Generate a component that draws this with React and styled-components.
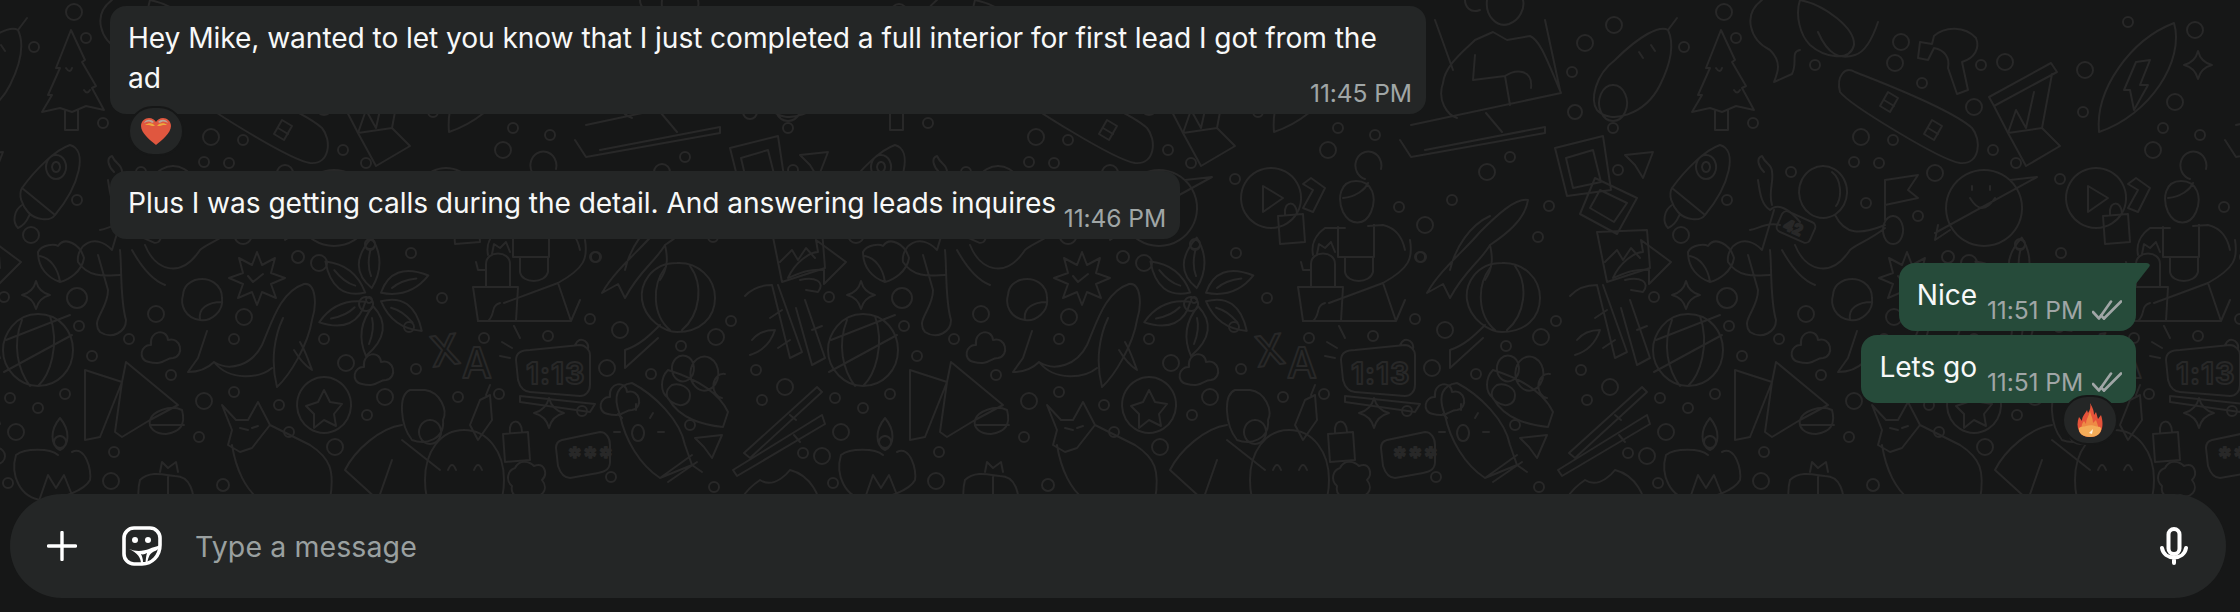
import React from "react";
import styled, { createGlobalStyle } from "styled-components";

const Global = createGlobalStyle`
  html, body { margin: 0; padding: 0; background: #161717; }
  body { font-family: Inter, "Liberation Sans", sans-serif; -webkit-font-smoothing: antialiased; }
`;

const Page = styled.div`
  position: relative;
  width: 2240px;
  height: 612px;
  overflow: hidden;
  background: #161717;
  display: flex;
  flex-direction: column;
`;
const Wallpaper = styled.svg`
  position: absolute;
  inset: 0;
  width: 2240px;
  height: 612px;
`;
const Conversation = styled.main`
  position: relative;
  height: 494px;
  box-sizing: border-box;
  padding: 6px 104px 0 110px;
  display: flex;
  flex-direction: column;
  align-items: flex-start;
`;
const Row = styled.div`
  display: flex;
  flex-direction: column;
  align-self: ${p => (p.$out ? "flex-end" : "flex-start")};
  align-items: ${p => (p.$out ? "flex-end" : "flex-start")};
  margin-top: ${p => p.$gap || 0}px;
`;
const Bubble = styled.div`
  position: relative;
  box-sizing: border-box;
  max-width: 1316px;
  padding: 12px 18px 16px 18px;
  border-radius: ${p => (p.$tail ? "16px 0 16px 16px" : "16px")};
  background: ${p => (p.$out ? "#264b3a" : "#242626")};
  color: #f7f8f8;
  font-size: 28.15px;
  line-height: 40px;
  letter-spacing: -0.08px;
`;
const Spacer = styled.span`
  display: inline-block;
  width: ${p => p.$w}px;
  height: 1px;
`;
const Meta = styled.div`
  position: absolute;
  right: 14px;
  bottom: 7px;
  display: flex;
  align-items: center;
  gap: 9px;
  font-size: 24.6px;
  line-height: 28px;
  letter-spacing: -0.1px;
  color: #a0a6a6;
  white-space: nowrap;
`;
const Tail = styled.svg`
  position: absolute;
  top: 0;
  right: -14px;
  width: 15px;
  height: 22px;
`;
const Reaction = styled.div`
  box-sizing: border-box;
  width: 56px;
  height: 50px;
  margin: -8px ${p => (p.$out ? "18px" : "0")} 0 ${p => (p.$out ? "0" : "18px")};
  border-radius: 25px;
  background: #242626;
  border: 2px solid #161717;
  display: flex;
  align-items: center;
  justify-content: center;
  z-index: 1;
`;
const Composer = styled.div`
  position: relative;
  box-sizing: border-box;
  width: 2216px;
  height: 104px;
  margin-left: 10px;
  border-radius: 52px;
  background: #242626;
  display: flex;
  align-items: center;
  padding: 0 38px 0 37px;
`;
const IconSlot = styled.span`
  display: flex;
  flex: none;
  margin-right: ${p => p.$mr || 0}px;
`;
const Placeholder = styled.span`
  flex: 1;
  font-size: 28.5px;
  letter-spacing: 0.1px;
  color: #9aa0a0;
`;

const dots = [
[298,257,6],[319,263,8],[411,253,5],[370,245,5],[4,297,5],[77,298,10],[156,314,8],[79,326,5],[129,339,5],[92,356,5],[244,317,8],[234,339,5],[324,339,5],[346,363,8],[416,369,5],[409,327,5],[442,298,5],[484,338,5],[596,257,5],[590,319,5],[620,330,8],[548,336,5],[607,368,8],[651,374,5],[681,346,5],[171,375,5],[65,394,5],[10,398,5],[38,408,5],[16,432,8],[204,401,8],[234,392,5],[279,405,5],[289,432,5],[199,437,5],[114,452,5],[335,447,8],[367,415,5],[385,397,8],[458,397,5],[499,394,5],[582,411,5],[611,477,5],[111,481,8],[8,483,5],[223,485,6],[716,337,8],[731,321,5],[756,370,5],[785,387,8],[762,400,5],[690,425,5],[822,456,8],[803,453,5],[714,487,5],
[74,12,8],[34,47,5],[86,38,5],[789,25,8],[760,43,8],[747,72,5],[750,112,7],[788,128,5],[103,123,5],[165,65,5],[245,63,8],[251,42,8],[272,83,5],[355,62,8],[331,65,5],[435,70,8],[324,107,8],[433,112,5],[478,22,5],[545,30,8],[525,102,8],[513,128,5],[550,135,5],[503,150,8],[343,150,5],[366,163,5],[285,173,8],[243,140,5],[211,137,8],[204,162,5],[229,163,5],[685,157,5],[662,172,8],[627,200,5],[600,225,8],[595,257,5],[724,206,5],[713,237,5],[793,170,5],[77,200,5],[31,235,8],[141,172,5],[216,203,5],[268,216,5],[370,244,5],[574,207,5],[410,179,5],
];

const spark = (x, y, r) =>
  `M${x} ${y - r}Q${x + r * 0.2} ${y - r * 0.2} ${x + r} ${y}Q${x + r * 0.2} ${y + r * 0.2} ${x} ${y + r}Q${x - r * 0.2} ${y + r * 0.2} ${x - r} ${y}Q${x - r * 0.2} ${y - r * 0.2} ${x} ${y - r}Z`;
const cloud = (x, y) =>
  `M${x - 12} ${y + 14}C${x - 24} ${y + 12} ${x - 20} ${y - 4} ${x - 10} ${y - 3}C${x - 12} ${y - 18} ${x + 6} ${y - 20} ${x + 7} ${y - 8}C${x + 20} ${y - 12} ${x + 24} ${y + 8} ${x + 12} ${y + 10}C${x + 4} ${y + 10} ${x + 2} ${y + 18} ${x - 12} ${y + 14}Z`;
const lock = (x, y) =>
  `M${x - 13} ${y - 6}L${x + 12} ${y - 8}L${x + 14} ${y + 20}L${x - 11} ${y + 22}ZM${x - 6} ${y - 7}C${x - 8} ${y - 22} ${x + 6} ${y - 22} ${x + 6} ${y - 8}`;

const paths = [
  // tree
  "M71 30L56 68L60 68L48 95L52 95L42 112L60 108L72 112L86 106L104 110L92 88L96 86L82 62L85 60ZM65 111V130H78V110M66 68q4 6 6 0M84 90q3 5 6 0",
  // shrimp + mouse
  "M112 0C92 15 100 40 120 50C132 62 128 72 124 82L142 74C148 62 140 52 150 50M150 0C175 5 205 28 204 45C200 62 175 58 160 45C150 35 145 15 150 0M168 32C178 55 190 60 205 55C215 52 222 40 228 22",
  // skateboard
  "M205 72C195 66 186 76 190 92C200 105 290 160 310 163C330 165 332 140 322 128C300 108 225 80 205 72ZM238 92l10 6l-8 14l-10 -6zM282 120l10 6l-8 14l-10 -6zM234 100l10 6M278 128l10 6",
  // hammer
  "M270 42L268 58L278 60L284 48C295 50 300 58 298 68L307 94L318 90L312 62C325 58 330 48 326 38C315 26 295 26 284 36L282 44Z",
  // drum
  "M339 97L401 63L407 72L344 106ZM344 106L358 133L392 128L402 74M358 133L366 110L376 128L384 92M358 133L376 166L410 146L392 128",
  // surfboard
  "M524 23C535 60 500 115 449 132C445 90 480 40 524 23ZM500 60L490 85L498 85L484 110L480 90L474 90L486 62Z",
  // woman & laptop
  "M662 0C660 16 672 28 684 24C695 20 700 8 698 0M640 0C640 6 645 14 655 10M618 83C620 65 640 50 650 40L668 32L682 40L705 36C715 40 722 60 736 93L586 125M618 83C612 100 622 115 632 118M650 55L648 80L680 76M680 76C692 68 708 70 706 88M680 76L685 105M661 113L677 132M575 140L586 157L720 133L720 127L600 150M610 20L628 70M720 20L735 90",
  // pear
  "M843 30C835 25 815 35 790 60C770 75 765 100 772 110C785 125 820 115 835 85C845 65 850 45 843 30ZM843 30L852 18M788 85a14 18 0 1 0 .1 0M826 45l4 6M814 52l4 6",
  // polaroids
  "M730 148L778 136L786 190L742 196ZM741 158L768 150L776 182L748 188ZM770 178L812 198L792 234L755 214ZM775 190L802 203L789 222L765 208ZM772 232L822 230L825 268L782 282ZM780 262L792 250L798 260L806 248L815 258",
  // plane
  "M800 155L828 152L818 178L810 165Z",
  // rocket
  "M70 145C88 150 80 185 55 215C50 222 35 220 28 212C22 205 18 195 22 188C35 170 55 150 70 145ZM22 188L55 215M22 205C14 210 12 222 18 228C26 225 28 218 30 214M56 155a10 12 0 1 0 .1 0M56 162a4 5 0 1 0 .1 0",
  // astronaut
  "M173 166a24 26 0 1 0 .1 0M182 172C192 180 192 198 186 206M114 172C108 166 106 158 112 156C116 165 122 164 122 172C124 182 118 192 122 205M108 180C110 195 112 205 120 210C128 202 140 210 150 222M100 230C110 228 118 222 130 225M124 210L112 250C95 232 76 245 78 262C90 280 110 275 120 275M120 250C122 270 120 300 126 320C126 332 112 340 100 332C90 320 108 310 108 290L98 255M132 250C142 268 152 280 165 285M145 245C155 270 180 280 200 250C205 245 220 240 235 228M185 215C195 235 210 235 235 225M243 216a10 14 0 1 0 .1 0",
  // flag + planet
  "M235 180V220M235 180L268 175L258 190L268 198L235 205M334 170a38 38 0 1 0 .1 0M285 233L387 177L360 180M300 230L285 240L288 225M320 198q12 20 25 0M322 186v4M340 186v4",
  // play + shape + lock
  "M446 168a30 30 0 1 0 .1 0M438 186L438 212L458 198ZM486 178L500 188L488 212L478 208L488 190L478 184Z",
  lock(466, 222),
  // gardener
  "M531 181C515 181 512 198 518 212C525 226 540 226 546 212C552 198 548 181 531 181ZM518 198C530 197 540 190 543 183M540 179a13 14 0 1 1 16 -10M500 228C490 235 486 245 488 255M520 228L500 228M543 226L558 225C572 228 578 240 580 250M513 227V257M549 225V257M513 257H549M520 257V272C522 284 545 284 548 272V257M585 240C588 258 585 268 558 283L504 303M558 283L571 321H478M580 300L571 321",
  // cactus pot
  "M473 287H518L516 321H478ZM486 287V264C486 250 510 250 510 264V287M486 270H478L476 262M500 303C490 306 496 314 488 321M510 252L506 242L500 248L494 244L492 254",
  // fish
  "M703 200C690 198 672 215 655 232C640 250 615 270 602 293L618 284L625 298C640 270 655 262 665 245C680 235 700 220 703 200ZM625 270C630 248 645 225 665 216M665 245C668 258 668 268 660 280",
  // arrow
  "M788 278C795 262 810 252 818 252L816 240L846 262L824 284V270C808 268 796 275 788 278Z",
  // lantern
  "M677 263C650 263 640 285 642 300C645 320 665 332 677 332C700 332 715 318 715 298C715 278 698 262 677 263ZM665 268C652 285 652 315 670 330M690 266C704 285 700 315 682 330M658 338L625 368L625 350C640 345 650 335 660 325",
  // bamboo
  "M745 296C755 285 768 285 772 285L790 358L802 352L778 285M782 310L770 318M790 340L778 348M800 280C815 276 826 282 818 292L806 290M805 300L825 358L812 365L796 308M812 330L822 326M752 340C760 330 770 330 775 330C770 345 760 352 750 355",
  // globe
  "M38 314C15 314 3 335 3 350C3 370 20 386 38 386C58 386 73 370 73 350C73 332 60 314 38 314ZM6 340L70 315M4 372L72 335M22 320C12 345 18 370 30 386M50 316C60 345 50 375 38 386",
  cloud(161, 348), cloud(374, 370), cloud(620, 400),
  // whale
  "M207 331L198 358L188 372C200 372 208 368 214 362C230 372 252 365 262 345C272 322 280 292 304 284C316 282 317 305 312 320C308 345 290 375 277 387C270 360 275 335 283 318M214 362C230 382 260 378 272 368M300 342C306 352 310 365 312 370C304 365 297 355 294 350",
  // triangle + bowl
  "M85 370L122 382L100 437L85 440ZM126 362L178 405L150 420L122 437L115 432L122 382ZM150 420C152 412 170 404 182 410C186 425 180 432 166 434C155 434 148 428 150 420ZM150 425H184",
  // diya
  "M60 418C50 430 50 445 60 450C70 445 70 430 60 418ZM60 436a6 6 0 1 0 .1 0M16 455C25 448 50 448 58 455M72 452C85 445 92 470 90 480M16 455C10 475 20 498 42 500C60 500 85 490 90 480M40 498L48 475L56 488L64 475L72 495",
  // fox
  "M222 405L232 430L228 445L240 452L252 448L270 425L258 402L248 420L236 420ZM270 425L310 445C330 458 335 470 330 500M232 445C236 470 246 490 260 500M240 428l8 2M252 428l6 -2",
  // star circle
  "M324 377a27 28 0 1 0 .1 0M324 390L330 402L342 404L334 414L336 426L324 420L314 428L314 414L306 406L318 402Z",
  // man
  "M410 390C398 395 400 425 412 440C425 445 445 440 443 420C448 410 440 392 425 390ZM430 420a11 12 0 1 0 .1 0M402 425C380 428 355 450 345 470L378 500M402 440L440 470M392 460L378 500",
  // smiley
  "M464 430C440 430 425 452 425 480C425 515 445 530 464 530C488 530 504 510 504 480C504 452 488 430 464 430ZM448 470q4 -10 8 0M474 470q4 -10 8 0",
  // burst
  "M257 252L262 265L275 258L271 273L285 278L271 284L276 298L262 292L257 305L252 292L238 298L243 284L229 278L243 273L239 258L252 265ZM248 276l5 6l10 -8",
  // blob
  "M195 280C210 276 222 285 222 298C224 312 210 322 200 320C185 318 180 305 183 295C184 285 190 282 195 280ZM200 320C198 308 208 302 222 302",
  // flower centre
  "M366 297a7 7 0 1 0 .1 0M369 297a3 3 0 1 0 .1 0",
  // Clock
  "M530 350L580 345C585 345 590 350 590 355L590 385C590 392 585 396 580 396L530 392C525 392 520 388 518 380L516 360C516 353 522 350 530 350ZM520 396L595 404L590 412L520 402ZM512 348L502 342M520 338L514 326M510 358L500 356M575 345q4 -8 10 -4q4 3 3 8",
  // password & sun lantern
  "M562 440L600 432C606 432 610 438 610 445L610 462C610 470 604 472 598 473L570 478C563 478 560 472 558 466L556 448C556 444 558 441 562 440Z",
  "M632 383C655 395 680 420 685 445L692 465L660 478C640 465 625 440 620 415C612 395 618 385 632 383ZM660 478L692 455M668 482L697 462M692 465L702 472",
  "M638 425a6 8 0 1 0 .1 0M650 418l3 -5M636 410V404M622 418l-4 -4M620 432h-6M658 432h6",
  // candle, puzzle
  "M470 425L480 400L490 395L492 420L478 440ZM486 395L490 385",
  "M515 468C520 458 530 462 534 466C545 462 548 474 542 480C550 490 540 500 530 495C520 502 510 495 512 486C505 480 508 470 515 468Z",
  // chopsticks
  "M817 387L744 453L750 458L822 392ZM822 415L733 470L737 476L825 424ZM790 415L796 420M794 435L800 442",
  // paw
  "M668 370C660 378 660 392 668 398C680 420 705 425 723 427L728 412C720 395 700 380 668 370ZM688 380a11 13 0 1 1 -2 -24a11 13 0 0 1 2 24ZM708 390a14 17 0 1 1 2 -32a14 17 0 0 1 -2 32ZM722 398a10 12 0 1 1 3 -24M672 385C680 382 690 388 690 395C690 405 680 408 672 402C665 398 665 390 672 385Z",
  // heart boot
  "M38 252C42 244 55 244 58 246C65 236 80 244 84 258C82 272 68 280 60 282C48 278 38 268 38 252ZM40 256C50 258 58 268 60 282",
  // cactus bottom, plane low
  "M140 480C150 470 165 475 175 476C190 476 195 490 195 520M160 472l2 -10l6 6l8 -6l2 10M140 480C136 495 140 510 144 520M168 476V520",
  "M695 438L722 435L712 458L704 447Z",
  // small ball
  "M760 480C745 490 735 505 735 520M790 470C810 475 822 495 822 520M760 480C775 490 790 470 790 470",
  spark(36, 295, 14), spark(548, 65, 14), spark(549, 413, 15),
  lock(516, 440),
];

const Doodles = () => (
  <g fill="none" stroke="#282828" strokeWidth="2" strokeLinecap="round" strokeLinejoin="round">
    {dots.map(([x, y, r], i) => <circle key={i} cx={x} cy={y} r={r} />)}
    {paths.map((d, i) => <path key={i} d={d} />)}
    {[-8, 62, 118, 180, 238, 300].map(a => (
      <g key={a} transform={`rotate(${a} 373 297)`}>
        <path d="M373 288C358 272 360 255 380 238C388 256 386 272 373 288ZM374 276C372 268 373 260 377 250" />
      </g>
    ))}
    <text x="526" y="384" fontFamily="Inter, sans-serif" fontSize="30" fontWeight="700" letterSpacing="1">1:13</text>
    <text x="430" y="366" fontFamily="Inter, sans-serif" fontSize="42" fontWeight="500" transform="rotate(-8 440 350)">X</text>
    <text x="462" y="378" fontFamily="Inter, sans-serif" fontSize="42" fontWeight="500">A</text>
    <text x="568" y="466" fontFamily="Inter, sans-serif" fontSize="26" fontWeight="500" letterSpacing="2">***</text>
    <text x="134" y="234" fontFamily="Inter, sans-serif" fontSize="15" fontWeight="600" transform="rotate(24 146 227)">42</text>
    <g transform="rotate(24 146 227)"><rect x="128" y="216" width="36" height="22" rx="5" /></g>
  </g>
);

const HeartEmoji = () => (
  <svg width="30" height="27" viewBox="0 0 30 27">
    <path d="M15 27C9 22 0 15 0 8C0 3 4 0 8 0C11 0 14 2 15 4C16 2 19 0 22 0C26 0 30 3 30 8C30 15 21 22 15 27Z" fill="#e0573f" />
    <path d="M3 5C5 1 10 1 13 4L11 5C9 3 6 3 3 5ZM17 4C20 1 25 1 27 5C24 3 21 3 19 5Z" fill="#b9a59a" />
    <path d="M4 7C7 5 10 5 12 6L14 8L11 8L8 7ZM18 6C21 5 24 5 26 7L22 7L19 8L16 8Z" fill="#eeaa3c" />
  </svg>
);
const FireEmoji = () => (
  <svg width="26" height="34" viewBox="0 0 26 34">
    <path d="M13 0C16 5 17 8 17 12L19 9C20 12 20 13 21 16L24 12C26 18 26 24 24 28C22 32 18 34 13 34C8 34 4 32 2 28C0 24 0 19 2 14L5 18C5 13 8 11 10 7L11 10C13 7 14 4 13 0Z" fill="#e5533a" />
    <path d="M13 8C14 13 16 15 16 20L19 17C20 20 22 24 21 27L5 27C4 23 5 20 7 18L9 21C9 16 12 13 13 8Z" fill="#ee8a45" />
    <path d="M2 25C4 23 7 24 9 23C12 22 16 22 18 23C20 24 23 23 24 25C25 29 21 34 13 34C6 34 1 30 2 25Z" fill="#f4ac58" />
    <path d="M12 30L16 26L15 31Z" fill="#fff3e0" />
  </svg>
);
const Ticks = () => (
  <svg width="30" height="20" viewBox="0 0 30 20" fill="none" stroke="#a0a6a6" strokeWidth="2.6" strokeLinecap="round" strokeLinejoin="round">
    <path d="M1 12L7 18.5L19 1.5" />
    <path d="M12 18.5L29 1.5" />
    <path d="M9 15.5L12 18.5" />
  </svg>
);
const PlusIcon = () => (
  <svg width="30" height="30" viewBox="0 0 30 30" fill="none" stroke="#fff" strokeWidth="3.4" strokeLinecap="round">
    <path d="M15 1.5V28.5M1.5 15H28.5" />
  </svg>
);
const StickerIcon = () => (
  <svg width="40" height="40" viewBox="0 0 40 40">
    <path d="M12 2H28A10 10 0 0 1 38 12V19C38 30 30 38 20 38H12A10 10 0 0 1 2 28V12A10 10 0 0 1 12 2Z" fill="none" stroke="#fff" strokeWidth="3.6" />
    <circle cx="13" cy="14" r="3" fill="#fff" />
    <circle cx="26" cy="14" r="3" fill="#fff" />
    <path d="M7 23C14 26 22 25 27 23C31 21 34 21 38 19C38 23 35 24 31 26C27 28 26 33 25 38L19 38C19 32 16 27 7 23Z" fill="#fff" />
    <path d="M19 28C21 29 23 28 25 27C24 30 24 33 23.5 36L21 36C21 33 20 30 19 28Z" fill="#242626" />
  </svg>
);
const MicIcon = () => (
  <svg width="28" height="38" viewBox="0 0 28 38" fill="none" stroke="#fff" strokeWidth="4" strokeLinecap="round">
    <rect x="8.5" y="2" width="11" height="25" rx="5.5" />
    <path d="M2 21C3 27 8 30.5 14 30.5C20 30.5 25 27 26 21M14 31V36" />
  </svg>
);

export default function App() {
  return (
    <Page>
      <Global />
      <Wallpaper viewBox="0 0 2240 612">
        <defs><g id="tile"><Doodles /></g></defs>
        {[-825, 0, 825, 1650].map(x => <use key={x} href="#tile" x={x} />)}
      </Wallpaper>
      <Conversation>
        <Row>
          <Bubble>
            Hey Mike, wanted to let you know that I just completed a full interior for first lead I got from the ad
            <Meta>11:45 PM</Meta>
          </Bubble>
          <Reaction><HeartEmoji /></Reaction>
        </Row>
        <Row $gap={15}>
          <Bubble>
            Plus I was getting calls during the detail. And answering leads inquires<Spacer $w={106} />
            <Meta>11:46 PM</Meta>
          </Bubble>
        </Row>
        <Row $out $gap={24}>
          <Bubble $out $tail>
            Nice<Spacer $w={141} />
            <Meta>11:51 PM <Ticks /></Meta>
            <Tail viewBox="0 0 15 22"><path d="M0 0H11.5C14.5 0 15.5 2 14 4L0 22Z" fill="#264b3a" /></Tail>
          </Bubble>
        </Row>
        <Row $out $gap={4}>
          <Bubble $out>
            Lets go<Spacer $w={141} />
            <Meta>11:51 PM <Ticks /></Meta>
          </Bubble>
          <Reaction $out><FireEmoji /></Reaction>
        </Row>
      </Conversation>
      <Composer>
        <IconSlot $mr={45}><PlusIcon /></IconSlot>
        <IconSlot $mr={33}><StickerIcon /></IconSlot>
        <Placeholder>Type a message</Placeholder>
        <IconSlot><MicIcon /></IconSlot>
      </Composer>
    </Page>
  );
}
